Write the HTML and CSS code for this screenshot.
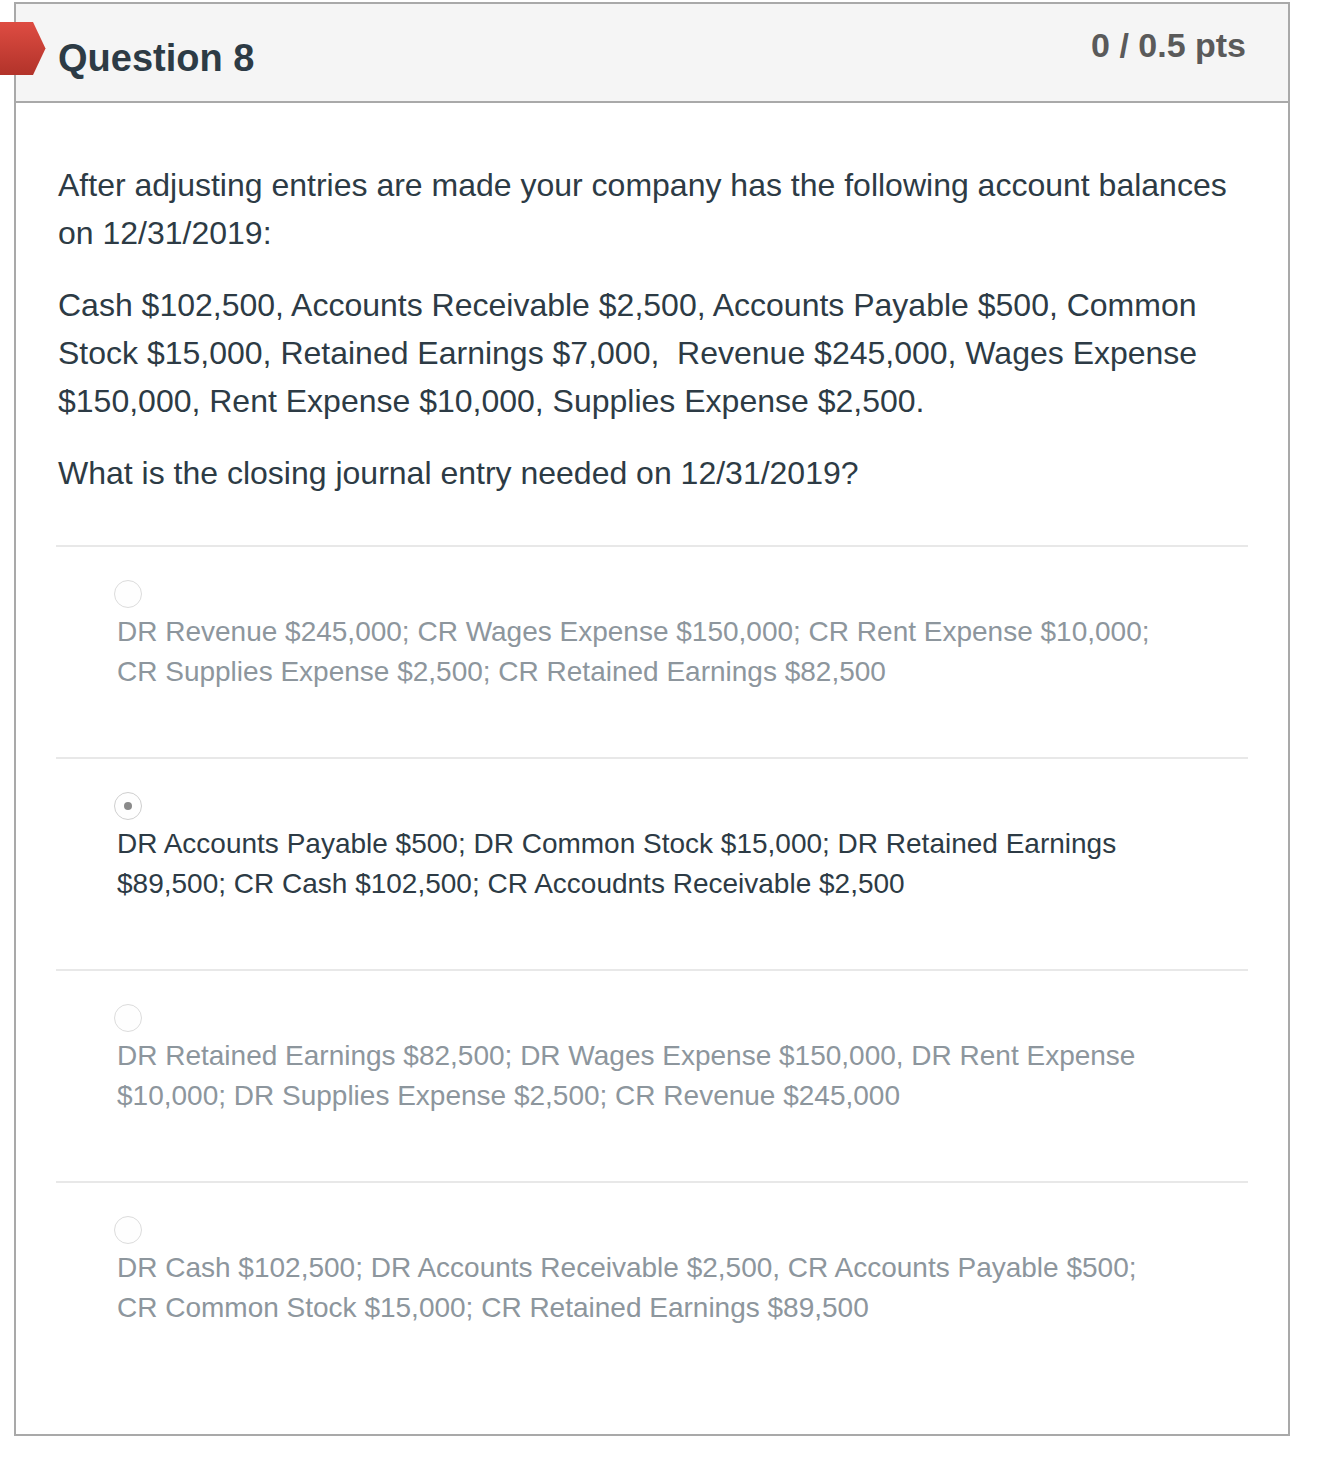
FILE: index.html
```html
<!DOCTYPE html>
<html lang="en">
<head>
<meta charset="utf-8">
<title>Question 8</title>
<link rel="stylesheet" href="styles.css">
</head>
<body>
<div class="flag">
  <svg width="46" height="54" viewBox="0 0 46 54">
    <defs>
      <linearGradient id="fg" x1="0" y1="0" x2="0" y2="1">
        <stop offset="0" stop-color="#de4c42"/>
        <stop offset="1" stop-color="#b2332a"/>
      </linearGradient>
    </defs>
    <polygon points="0,0 33,0 45.5,26.5 33,53 0,53" fill="url(#fg)"/>
  </svg>
</div>
<div class="card">
  <div class="card-header">
    <h2 class="title">Question 8</h2>
    <div class="points">0 / 0.5 pts</div>
  </div>
  <div class="card-body">
    <p class="q-text">After adjusting entries are made your company has the following account balances on 12/31/2019:</p>
    <p class="q-text">Cash $102,500, Accounts Receivable $2,500, Accounts Payable $500, Common Stock $15,000, Retained Earnings $7,000,&nbsp; Revenue $245,000, Wages Expense $150,000, Rent Expense $10,000, Supplies Expense $2,500.</p>
    <p class="q-text">What is the closing journal entry needed on 12/31/2019?</p>
    <div class="answers">
      <div class="answer">
        <span class="radio"></span>
        <div class="answer-text">DR Revenue $245,000; CR Wages Expense $150,000; CR Rent Expense $10,000; CR Supplies Expense $2,500; CR Retained Earnings $82,500</div>
      </div>
      <div class="answer selected">
        <span class="radio"><span class="dot"></span></span>
        <div class="answer-text">DR Accounts Payable $500; DR Common Stock $15,000; DR Retained Earnings $89,500; CR Cash $102,500; CR Accoudnts Receivable $2,500</div>
      </div>
      <div class="answer">
        <span class="radio"></span>
        <div class="answer-text">DR Retained Earnings $82,500; DR Wages Expense $150,000, DR Rent Expense $10,000; DR Supplies Expense $2,500; CR Revenue $245,000</div>
      </div>
      <div class="answer">
        <span class="radio"></span>
        <div class="answer-text">DR Cash $102,500; DR Accounts Receivable $2,500, CR Accounts Payable $500; CR Common Stock $15,000; CR Retained Earnings $89,500</div>
      </div>
    </div>
  </div>
</div>
</body>
</html>
```

FILE: styles.css
```css
* { box-sizing: border-box; }

html, body {
  margin: 0;
  padding: 0;
  background: #ffffff;
}

body {
  font-family: "Liberation Sans", Arial, Helvetica, sans-serif;
  color: #2d3b45;
  position: relative;
  width: 1318px;
  min-height: 1458px;
}

.flag {
  position: absolute;
  left: 0;
  top: 22px;
  width: 46px;
  height: 54px;
  z-index: 2;
}

.flag svg { display: block; }

.card {
  margin: 2px 0 0 14px;
  width: 1276px;
  border: 2px solid #a9a9a9;
  background: #ffffff;
}

.card-header {
  display: flex;
  justify-content: space-between;
  align-items: flex-start;
  height: 99px;
  background: #f5f5f5;
  border-bottom: 2px solid #a9a9a9;
  padding: 0 42px;
}

.title {
  margin: 35px 0 0 0;
  font-size: 38px;
  line-height: 38px;
  font-weight: 700;
  color: #2d3b45;
}

.points {
  margin-top: 24px;
  font-size: 34px;
  line-height: 34px;
  font-weight: 700;
  color: #5a5a5a;
}

.card-body {
  padding: 58px 40px 41px 42px;
}

.q-text {
  margin: 0 0 24px 0;
  font-size: 32px;
  line-height: 48px;
  color: #2d3b45;
}

.q-text:last-of-type {
  margin-bottom: 48px;
}

.answers {
  margin-left: -2px;
}

.answer {
  border-top: 2px solid #e8e8e8;
  padding: 33px 78px 65px 58px;
  height: 212px;
}

.radio {
  display: flex;
  align-items: center;
  justify-content: center;
  width: 28px;
  height: 28px;
  border-radius: 50%;
  border: 1px solid #dcdcdc;
  background: #fefefe;
  margin-bottom: 4px;
}

.selected .radio {
  border-color: #cfcfcf;
}

.dot {
  display: block;
  width: 8px;
  height: 8px;
  border-radius: 50%;
  background: #8a8a8a;
}

.answer-text {
  font-size: 28px;
  line-height: 40px;
  color: #8d969d;
  padding-left: 3px;
}

.selected .answer-text {
  color: #2d3b45;
}
```
